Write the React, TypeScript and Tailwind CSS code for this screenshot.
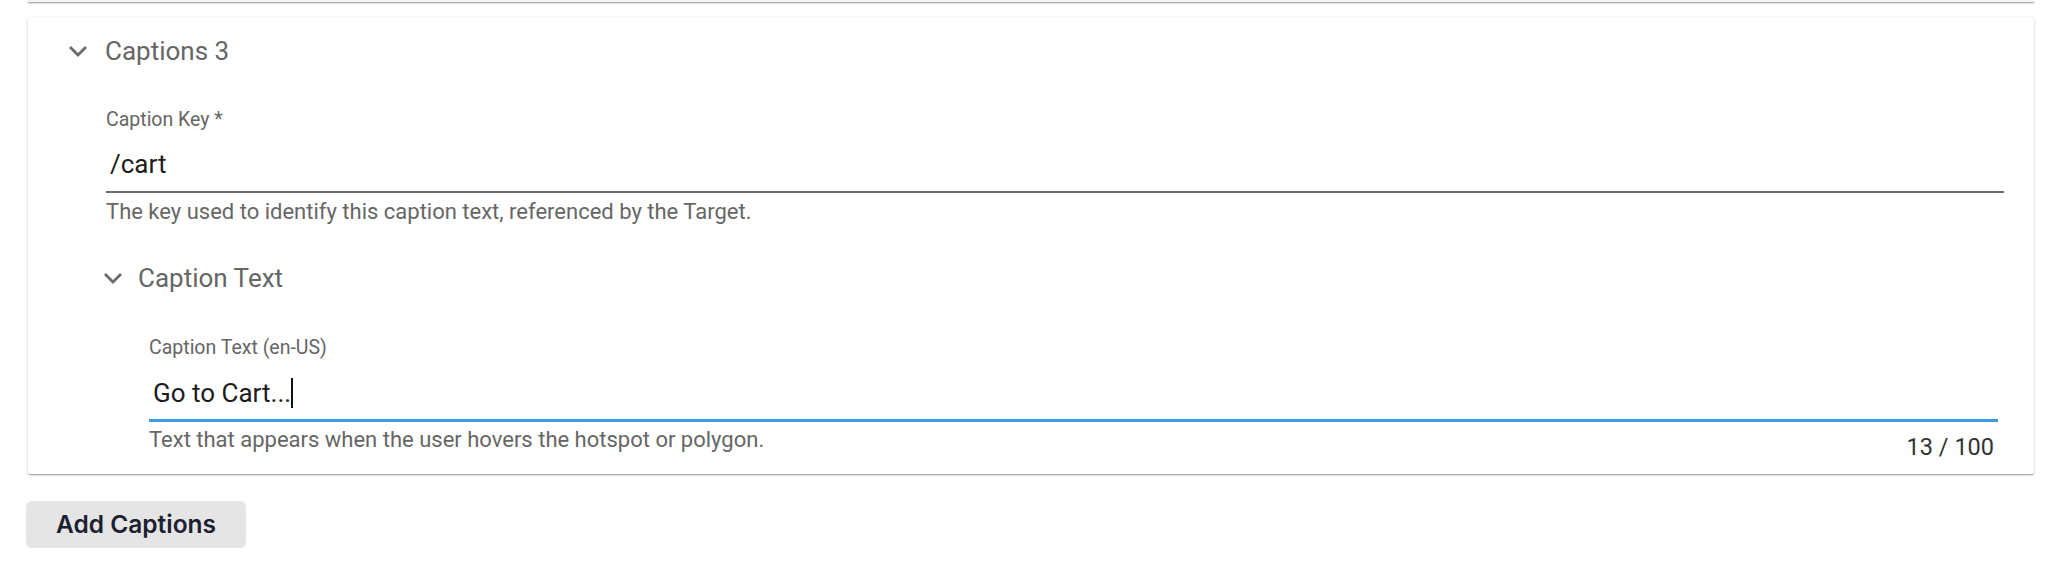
import React from 'react';

const Chevron = () => (
  <svg width="20" height="12" viewBox="0 0 20 12" className="shrink-0">
    <polyline points="2,2 10,10 18,2" fill="none" stroke="#6b6b6b" strokeWidth="2.8" />
  </svg>
);

const SectionHeader = ({ title, className }: { title: string; className: string }) => (
  <div className={`flex items-center ${className}`}>
    <Chevron />
    <span className="text-[26px] leading-[32px] text-[#666666]">{title}</span>
  </div>
);

export default function App() {
  return (
    <div className="w-full h-[568px] bg-white px-[28px] font-['Roboto',sans-serif] overflow-hidden">
      {/* bottom edge of the previous card */}
      <div className="h-[2px] bg-[#f4f4f4] shadow-[0_1px_2px_rgba(0,0,0,0.45)]" />

      <div className="mt-[15px] bg-white rounded-[2px] shadow-[0_1px_3px_rgba(0,0,0,0.2),0_1px_1px_rgba(0,0,0,0.14),0_2px_1px_-1px_rgba(0,0,0,0.12)] pl-[40px] pr-[30px]">
        <SectionHeader title="Captions 3" className="h-[68px] gap-[17px]" />

        <div className="pl-[35px]">
          {/* Caption Key field */}
          <div className="pl-[3px]">
            <div className="pt-[23px] text-[19.5px] leading-[24px] text-[#666666]">Caption Key *</div>
            <div className="mt-[16px] pl-[4px] pb-[11px] border-b-2 border-[#6b6b6b] text-[26px] leading-[32px] text-[#1c1c1c]">
              /cart
            </div>
            <div className="mt-[6px] text-[22px] leading-[26px] text-[#666666]">
              The key used to identify this caption text, referenced by the Target.
            </div>
          </div>

          <SectionHeader title="Caption Text" className="mt-[27px] h-[52px] gap-[15px]" />

          {/* Caption Text field */}
          <div className="pl-[46px] pr-[6px] pb-[13px]">
            <div className="mt-[32px] text-[19.5px] leading-[24px] text-[#666666]">Caption Text (en-US)</div>
            <div className="mt-[17px] pl-[4px] pb-[10px] border-b-[3px] border-[#3d99e0] text-[26px] leading-[32px] text-[#1c1c1c] flex items-center">
              <span>Go to Cart...</span>
              <span className="inline-block w-[2px] h-[30px] bg-[#111111]" />
            </div>
            <div className="flex justify-between items-start">
              <div className="mt-[5px] text-[22px] leading-[26px] text-[#666666]">
                Text that appears when the user hovers the hotspot or polygon.
              </div>
              <div className="mt-[11px] pr-[4px] text-[23.5px] leading-[28px] text-[#333333]">13 / 100</div>
            </div>
          </div>
        </div>
      </div>

      <button className="mt-[27px] -ml-[2px] w-[220px] h-[47px] rounded-[6px] bg-[#e5e5e5] font-['Inter',sans-serif] font-semibold text-[24.5px] text-[#1b2130]">
        Add Captions
      </button>
    </div>
  );
}
